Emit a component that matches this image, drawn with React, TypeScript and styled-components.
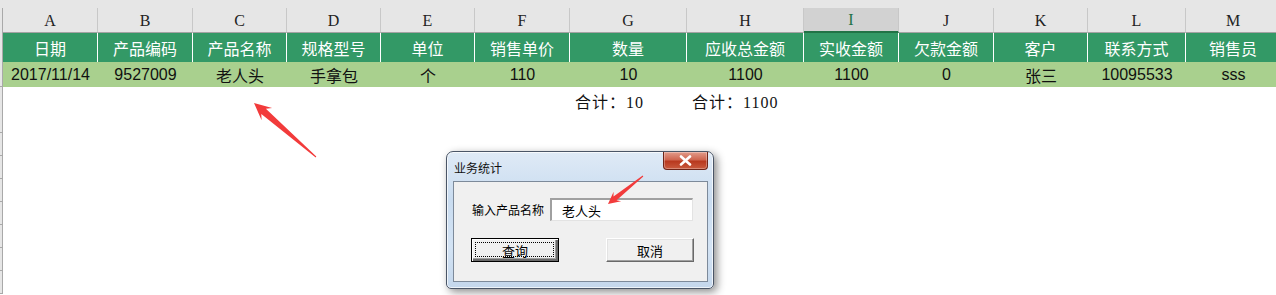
import React from 'react';
import styled, { createGlobalStyle, css } from 'styled-components';

const GlobalStyle = createGlobalStyle`
  html, body {
    margin: 0;
    padding: 0;
    background: #ffffff;
    overflow: hidden;
  }
  #root {
    width: 1276px;
    height: 295px;
  }
`;

const COLS = '3px 95px 95px 94px 94px 94px 95px 117px 117px 95px 95px 94px 98px 95px';

const letters = ['A', 'B', 'C', 'D', 'E', 'F', 'G', 'H', 'I', 'J', 'K', 'L', 'M'];
const heads = ['日期', '产品编码', '产品名称', '规格型号', '单位', '销售单价', '数量', '应收总金额', '实收金额', '欠款金额', '客户', '联系方式', '销售员'];
const values = ['2017/11/14', '9527009', '老人头', '手拿包', '个', '110', '10', '1100', '1100', '0', '张三', '10095533', 'sss'];

const Page = styled.div`
  position: relative;
  width: 1276px;
  height: 295px;
  overflow: hidden;
`;

const Sheet = styled.div`
  display: flex;
  flex-direction: column;
`;

const TopStrip = styled.div`
  height: 8px;
  background: #e6e6e6;
`;

const Row = styled.div<{ $h: number }>`
  display: grid;
  grid-template-columns: ${COLS};
  height: ${(p) => p.$h}px;
`;

const Gutter = styled.div<{ $open?: boolean }>`
  background: #e6e6e6;
  border-right: 1px solid #a9a9a9;
  border-bottom: ${(p) => (p.$open ? 'none' : '1px solid #a9a9a9')};
  box-sizing: border-box;
`;

const LetterCell = styled.div<{ $selected?: boolean }>`
  display: flex;
  align-items: center;
  justify-content: center;
  box-sizing: border-box;
  background: #e6e6e6;
  border-right: 1px solid #c8c8c8;
  border-bottom: 1px solid #a3a3a3;
  font-family: 'Liberation Serif', serif;
  font-size: 16px;
  color: #222;
  padding-top: 1px;
  ${(p) =>
    p.$selected &&
    css`
      background: #d2d2d2;
      border-bottom: 2px solid #217346;
      color: #217346;
    `}
`;

const HeadCell = styled.div`
  display: flex;
  align-items: center;
  justify-content: center;
  box-sizing: border-box;
  background: #339966;
  border-right: 1px solid #ffffff;
  color: #ffffff;
  font-family: 'Noto Sans CJK SC', sans-serif;
  font-size: 16px;
  white-space: nowrap;
  overflow: hidden;
`;

const DataCell = styled.div`
  display: flex;
  align-items: center;
  justify-content: center;
  background: #a9d08e;
  color: #111;
  font-family: 'Liberation Sans', 'Noto Sans CJK SC', sans-serif;
  font-size: 16px;
  white-space: nowrap;
  overflow: hidden;
`;

const PlainCell = styled.div`
  display: flex;
  align-items: center;
  padding-left: 5px;
  padding-top: 2px;
  font-family: 'Liberation Serif', 'Noto Sans CJK SC', serif;
  font-size: 16px;
  letter-spacing: 1px;
  color: #111;
  white-space: nowrap;
`;

/* dialog window */
const Window = styled.div`
  position: absolute;
  left: 446px;
  top: 151px;
  width: 268px;
  height: 138px;
  box-sizing: border-box;
  display: flex;
  flex-direction: column;
  padding: 0 5px 6px 6px;
  border: 1px solid #4a5566;
  border-radius: 7px 7px 5px 5px;
  background: linear-gradient(180deg, #dfeaf6 0%, #c9dcf0 35%, #d3e3f4 70%, #c4d7ec 100%);
  box-shadow: 3px 3px 8px rgba(0, 0, 0, 0.45), inset 0 0 0 1px rgba(255, 255, 255, 0.7);
`;

const TitleBar = styled.div`
  height: 29px;
  display: flex;
  align-items: flex-start;
  justify-content: space-between;
`;

const Title = styled.span`
  margin-top: 7px;
  padding-left: 1px;
  font-family: 'Noto Sans CJK SC', sans-serif;
  font-size: 12px;
  color: #111;
`;

const CloseButton = styled.div`
  width: 45px;
  height: 18px;
  box-sizing: border-box;
  display: flex;
  align-items: center;
  justify-content: center;
  border: 1px solid #6e2418;
  border-top: none;
  border-radius: 0 0 4px 4px;
  background: linear-gradient(180deg, #e29c8b 0%, #cf6650 45%, #b8391f 55%, #c95a3e 100%);
  box-shadow: inset 0 0 0 1px rgba(255, 255, 255, 0.3);
`;

const Client = styled.div`
  flex: 1;
  box-sizing: border-box;
  background: #f0f0f0;
  border: 1px solid #7d8a9a;
  padding: 16px 13px 0 18px;
  display: flex;
  flex-direction: column;
  font-family: 'Noto Sans CJK SC', sans-serif;
  font-size: 12px;
  color: #000;
`;

const FieldRow = styled.div`
  display: flex;
  align-items: center;
  gap: 6px;
`;

const Label = styled.span`
  width: 72px;
  white-space: nowrap;
`;

const Input = styled.div`
  width: 143px;
  height: 23px;
  box-sizing: border-box;
  background: #ffffff;
  border-top: 2px solid #a0a0a0;
  border-left: 2px solid #a0a0a0;
  border-right: 1px solid #e3e3e3;
  border-bottom: 1px solid #e3e3e3;
  padding-left: 10px;
  display: flex;
  align-items: center;
  font-size: 13px;
`;

const ButtonRow = styled.div`
  display: flex;
  justify-content: space-between;
  margin-top: 17px;
  margin-left: -1px;
`;

const Button = styled.div<{ $default?: boolean }>`
  position: relative;
  width: 88px;
  height: 24px;
  box-sizing: border-box;
  display: flex;
  align-items: center;
  justify-content: center;
  background: #f0f0f0;
  font-size: 13px;
  ${(p) =>
    p.$default
      ? css`
          border: 1px solid #000;
          box-shadow: inset 1px 1px 0 #fff, inset -2px -2px 0 #696969, inset -3px -3px 0 #a0a0a0;
        `
      : css`
          border-top: 1px solid #fff;
          border-left: 1px solid #fff;
          border-right: 1px solid #696969;
          border-bottom: 1px solid #696969;
          box-shadow: inset -1px -1px 0 #a0a0a0, inset 1px 1px 0 #e3e3e3;
        `}
`;

const FocusRing = styled.span`
  position: absolute;
  inset: 3px 4px 4px 3px;
  border: 1px dotted #000;
`;

const Overlay = styled.svg`
  position: absolute;
  left: 0;
  top: 0;
  pointer-events: none;
`;

function arrowPoints(tx: number, ty: number, px: number, py: number, hl: number, hw: number, sw: number) {
  const l = Math.hypot(px - tx, py - ty);
  const ux = (px - tx) / l;
  const uy = (py - ty) / l;
  const nx = -uy;
  const ny = ux;
  const nk = [px - ux * hl * 0.75, py - uy * hl * 0.75];
  const wb = [px - ux * hl, py - uy * hl];
  const pts = [
    [tx + nx * 0.5, ty + ny * 0.5],
    [nk[0] + nx * sw, nk[1] + ny * sw],
    [wb[0] + nx * hw, wb[1] + ny * hw],
    [px, py],
    [wb[0] - nx * hw, wb[1] - ny * hw],
    [nk[0] - nx * sw, nk[1] - ny * sw],
    [tx - nx * 0.5, ty - ny * 0.5],
  ];
  return pts.map((p) => `${p[0].toFixed(1)},${p[1].toFixed(1)}`).join(' ');
}

const App: React.FC = () => {
  const blanks = Array.from({ length: 8 });
  return (
    <Page>
      <GlobalStyle />
      <Sheet>
        <TopStrip />
        <Row $h={25}>
          <Gutter $open />
          {letters.map((l) => (
            <LetterCell key={l} $selected={l === 'I'}>
              {l}
            </LetterCell>
          ))}
        </Row>
        <Row $h={29}>
          <Gutter $open />
          {heads.map((h) => (
            <HeadCell key={h}>{h}</HeadCell>
          ))}
        </Row>
        <Row $h={25}>
          <Gutter />
          {values.map((v, i) => (
            <DataCell key={i}>{v}</DataCell>
          ))}
        </Row>
        <Row $h={23}>
          <Gutter />
          {letters.map((l) => (
            <PlainCell key={l}>
              {l === 'G' ? '合计：10' : l === 'H' ? '合计：1100' : ''}
            </PlainCell>
          ))}
        </Row>
        {blanks.map((_, i) => (
          <Row key={i} $h={23}>
            <Gutter />
          </Row>
        ))}
      </Sheet>

      <Window>
        <TitleBar>
          <Title>业务统计</Title>
          <CloseButton>
            <svg width="13" height="11" viewBox="0 0 13 11">
              <path d="M2 1.5 L11 9.5 M11 1.5 L2 9.5" stroke="#ffffff" strokeWidth="2.6" strokeLinecap="round" />
            </svg>
          </CloseButton>
        </TitleBar>
        <Client>
          <FieldRow>
            <Label>输入产品名称</Label>
            <Input>老人头</Input>
          </FieldRow>
          <ButtonRow>
            <Button $default>
              <FocusRing />
              查询
            </Button>
            <Button>取消</Button>
          </ButtonRow>
        </Client>
      </Window>

      <Overlay width="1276" height="295" viewBox="0 0 1276 295">
        <polygon points={arrowPoints(316, 157, 254, 103, 17, 8, 3.5)} fill="#f23b3b" />
        <polygon points={arrowPoints(643, 176, 608, 204, 12, 6, 2.5)} fill="#f23b3b" />
      </Overlay>
    </Page>
  );
};

export default App;
